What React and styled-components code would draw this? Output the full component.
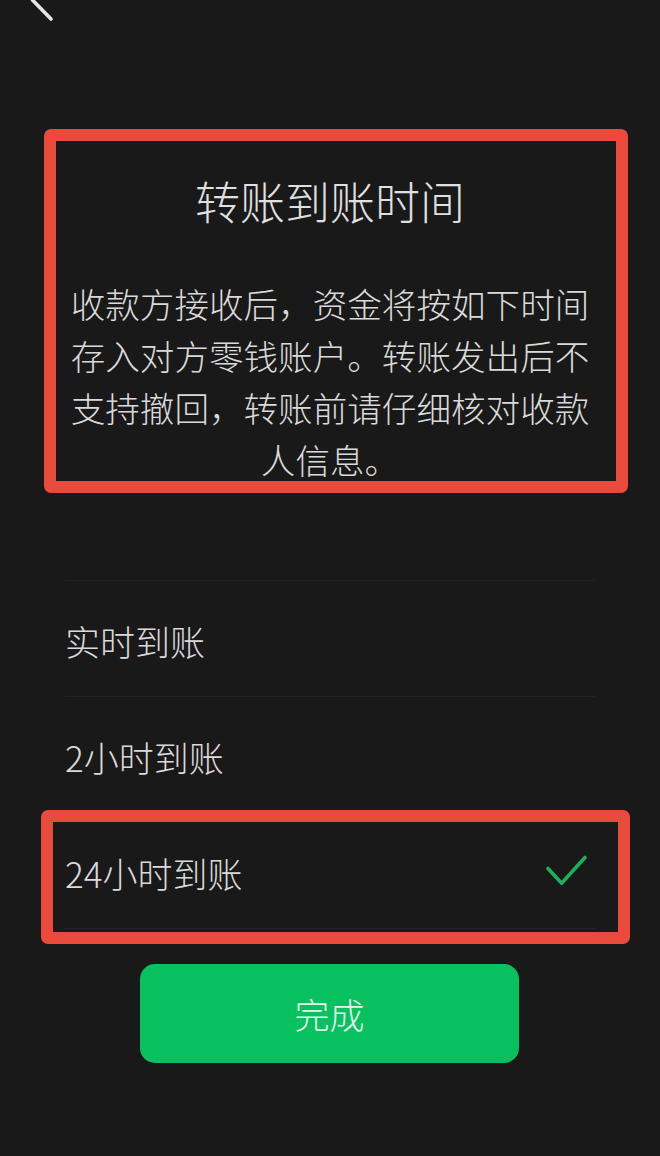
import React from "react";
import styled, { createGlobalStyle } from "styled-components";

const GlobalStyle = createGlobalStyle`
  html, body {
    margin: 0;
    padding: 0;
    background: #191919;
  }
  body {
    font-family: "Noto Sans CJK SC", "Noto Sans", sans-serif;
    color: #d9d9d9;
    -webkit-font-smoothing: antialiased;
  }
  * { box-sizing: border-box; }
`;

const Page = styled.div`
  width: 660px;
  min-height: 1156px;
  background: #191919;
  overflow: hidden;
`;

const TopBar = styled.div`
  height: 24px;
  overflow: hidden;
  padding-left: 27px;
`;

const BackIcon = styled.svg`
  display: block;
  margin-top: -24px;
`;

const NoticeCard = styled.section`
  margin: 105px 0 0 44px;
  width: 584px;
  height: 364px;
  border: 12px solid #e84a3b;
  border-radius: 7px;
  padding: 30px 20px 0 8px;
  text-align: center;
`;

const Title = styled.h1`
  margin: 0;
  font-size: 45px;
  line-height: 60px;
  font-weight: 300;
  color: #e0e0e0;
`;

const Description = styled.p`
  margin: 46px 0 0;
  font-size: 34.6px;
  line-height: 52px;
  font-weight: 300;
  color: #dadada;
`;

const OptionList = styled.div`
  margin: 87px 65px 0;
  border-top: 1px solid #242424;
`;

const OptionRow = styled.div`
  height: 116px;
  padding-top: 4px;
  border-bottom: 1px solid #242424;
  display: flex;
  align-items: center;
  justify-content: space-between;
  font-size: 35px;
  font-weight: 300;
  color: #dadada;
  margin-top: ${(p) => (p.$inset ? "-9px" : "0")};
`;

const Highlight = styled.div`
  margin: -3px -35px 0 -24px;
  border: 12px solid #e84a3b;
  border-radius: 7px;
  padding: 0 23px 3px 12px;
`;

const CheckIcon = styled.svg`
  margin-right: 6px;
  flex: none;
`;

const DoneButton = styled.button`
  display: block;
  margin: 20px 0 0 140px;
  width: 379px;
  height: 99px;
  border: none;
  border-radius: 15px;
  background: #07c160;
  color: #e4f7eb;
  font-family: "Noto Sans CJK SC", "Noto Sans", sans-serif;
  font-size: 35px;
  font-weight: 300;
  padding: 0;
`;

const options = [
  { label: "实时到账" },
  { label: "2小时到账" },
  { label: "24小时到账", selected: true },
];

export default function App() {
  return (
    <Page>
      <GlobalStyle />
      <TopBar>
        <BackIcon width="32" height="48" viewBox="0 0 32 48">
          <path
            d="M24 5 L5.5 24 L24 43"
            fill="none"
            stroke="#e6e6e6"
            strokeWidth="3.6"
            strokeLinecap="round"
            strokeLinejoin="round"
          />
        </BackIcon>
      </TopBar>

      <NoticeCard>
        <Title>转账到账时间</Title>
        <Description>
          收款方接收后，资金将按如下时间存入对方零钱账户。转账发出后不支持撤回，转账前请仔细核对收款人信息。
        </Description>
      </NoticeCard>

      <OptionList>
        {options.map((o) =>
          o.selected ? (
            <Highlight key={o.label}>
              <OptionRow $inset>
                <span>{o.label}</span>
                <CheckIcon width="44" height="36" viewBox="0 0 44 36">
                  <path
                    d="M3 13.5 L16.6 28.2 L40 2.5"
                    fill="none"
                    stroke="#1fae5c"
                    strokeWidth="3.6"
                    strokeLinecap="round"
                    strokeLinejoin="round"
                  />
                </CheckIcon>
              </OptionRow>
            </Highlight>
          ) : (
            <OptionRow key={o.label}>
              <span>{o.label}</span>
            </OptionRow>
          )
        )}
      </OptionList>

      <DoneButton>完成</DoneButton>
    </Page>
  );
}
